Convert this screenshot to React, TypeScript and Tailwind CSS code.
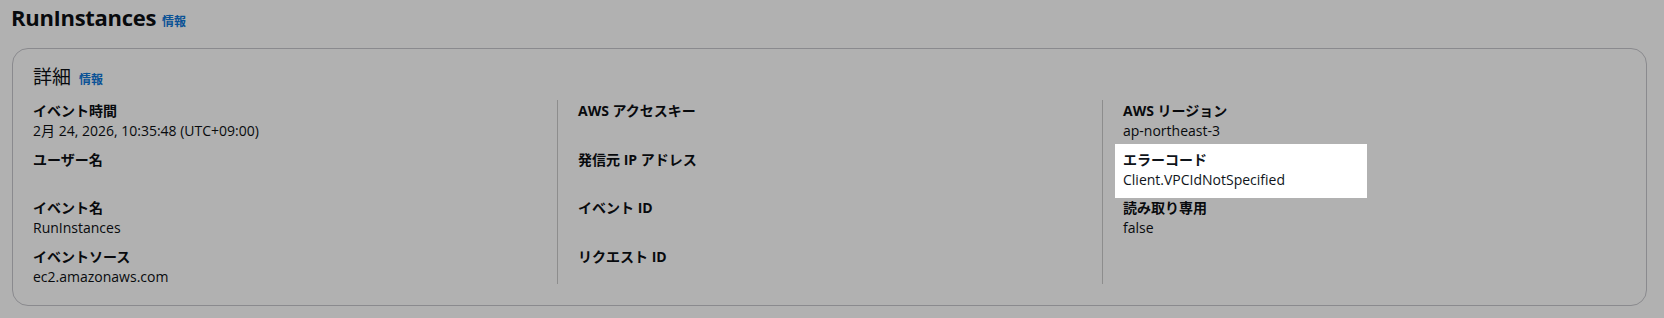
import React from 'react';

type Pair = { label: string; value?: string; highlight?: boolean };

const columns: Pair[][] = [
  [
    { label: 'イベント時間', value: '2月 24, 2026, 10:35:48 (UTC+09:00)' },
    { label: 'ユーザー名' },
    { label: 'イベント名', value: 'RunInstances' },
    { label: 'イベントソース', value: 'ec2.amazonaws.com' },
  ],
  [
    { label: 'AWS アクセスキー' },
    { label: '発信元 IP アドレス' },
    { label: 'イベント ID' },
    { label: 'リクエスト ID' },
  ],
  [
    { label: 'AWS リージョン', value: 'ap-northeast-3' },
    { label: 'エラーコード', value: 'Client.VPCIdNotSpecified', highlight: true },
    { label: '読み取り専用', value: 'false' },
  ],
];

const font = { fontFamily: '"Open Sans", "Noto Sans CJK JP", sans-serif' };

const KeyValue: React.FC<{ pair: Pair }> = ({ pair }) => (
  <div
    className={
      pair.highlight
        ? 'flex flex-col w-[252px] -ml-[8px] pl-[8px] -mt-[5px] pt-[5px] -mb-[8px] pb-[8px] bg-white text-[#0f141a]'
        : 'flex flex-col'
    }
  >
    <div className="h-[21px] text-[14px] leading-[21px] font-bold">{pair.label}</div>
    <div className="h-[20px] text-[14px] leading-[20px]">{pair.value ?? ''}</div>
  </div>
);

const Info: React.FC<{ gap: string }> = ({ gap }) => (
  <span className={`text-[12px] font-bold text-[#0a5296] ${gap}`}>情報</span>
);

export default function App() {
  return (
    <div className="w-[1664px] h-[318px] bg-[#b1b1b1] text-[#080a0d] overflow-hidden" style={font}>
      <div className="pl-[11px] pt-[2px] flex items-baseline h-[48px]">
        <h1 className="text-[22px] leading-[30px] font-bold tracking-[-0.3px]">RunInstances</h1>
        <Info gap="ml-[6px]" />
      </div>
      <div className="ml-[12px] w-[1635px] h-[258px] border border-[#8a8a8e] rounded-[16px] px-[20px] pt-[16px]">
        <div className="flex items-baseline h-[35px]">
          <h2 className="text-[19px] leading-[24px]">詳細</h2>
          <Info gap="ml-[8px]" />
        </div>
        <div className="flex">
          {columns.map((col, i) => (
            <div
              key={i}
              className={
                i === 0
                  ? 'w-[524px] flex flex-col gap-[7.5px]'
                  : i === 1
                    ? 'w-[545px] h-[184px] border-l border-[#8d8d8d] pl-[20px] flex flex-col gap-[7.5px]'
                    : 'flex-1 h-[184px] border-l border-[#8d8d8d] pl-[20px] flex flex-col gap-[7.5px]'
              }
            >
              {col.map((p) => (
                <KeyValue key={p.label} pair={p} />
              ))}
            </div>
          ))}
        </div>
      </div>
    </div>
  );
}
